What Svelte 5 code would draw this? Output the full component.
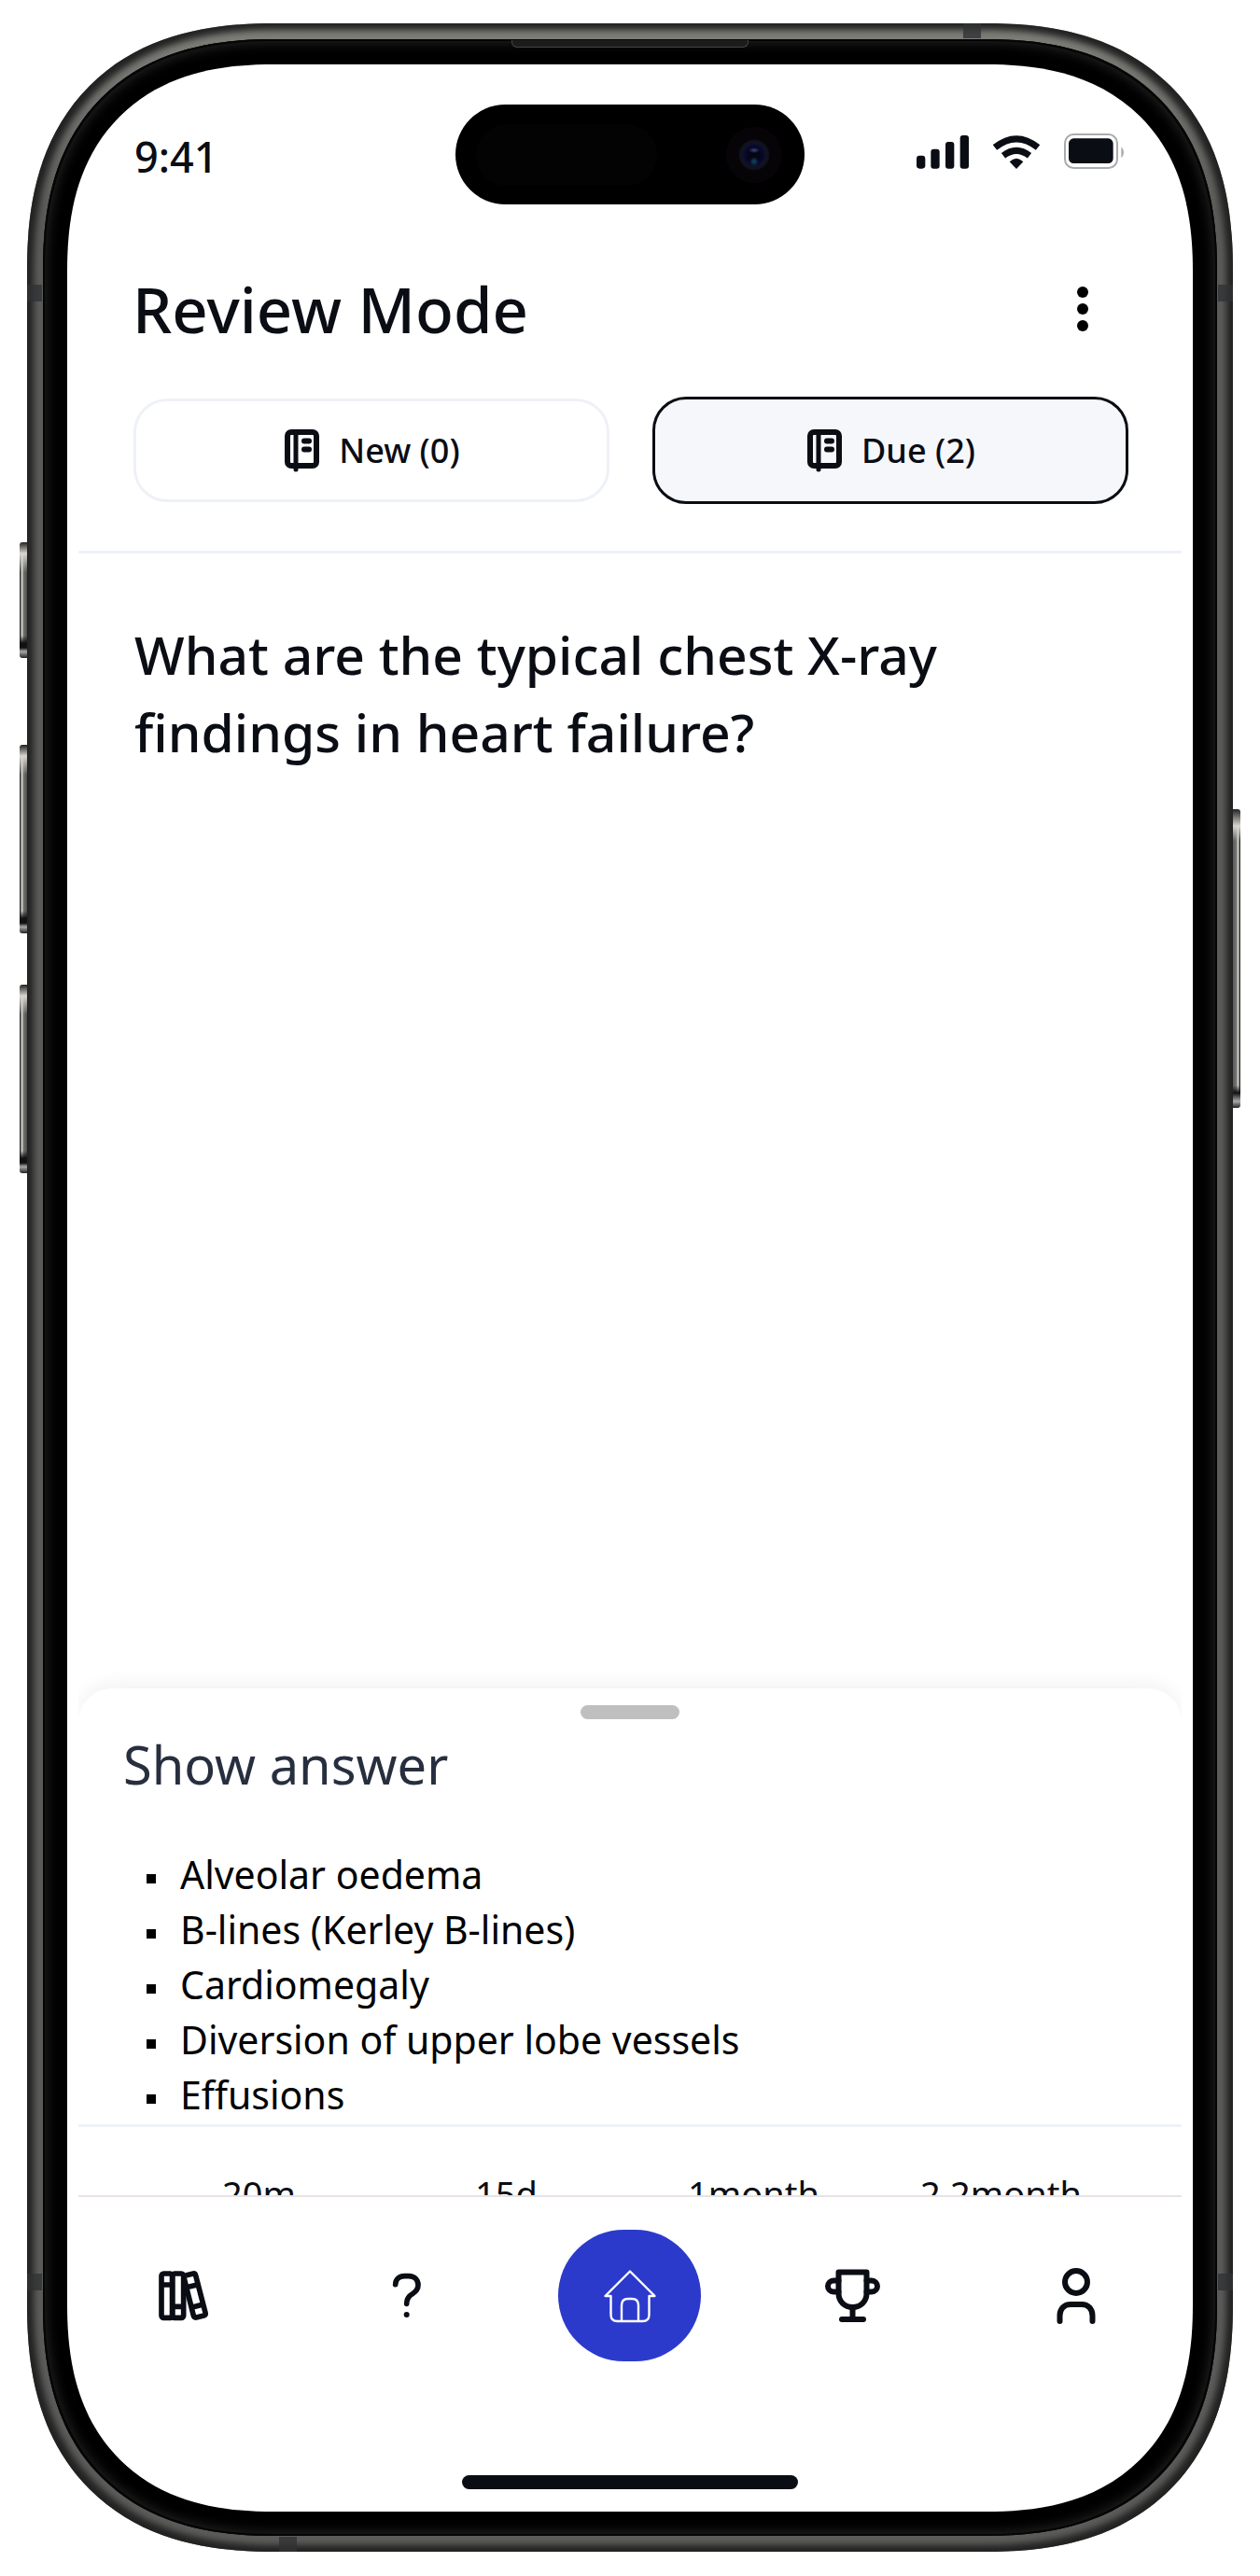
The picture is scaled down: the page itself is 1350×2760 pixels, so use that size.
<script>
  let selected = $state('due');
  const tabs = [
    { id: 'new', label: 'New (0)' },
    { id: 'due', label: 'Due (2)' }
  ];
  const answers = [
    'Alveolar oedema',
    'B-lines (Kerley B-lines)',
    'Cardiomegaly',
    'Diversion of upper lobe vessels',
    'Effusions'
  ];
  const intervals = ['20m', '15d', '1month', '2.2month'];
</script>

<div class="page">
  <div class="phone">
    <span class="key action"></span>
    <span class="key volume-up"></span>
    <span class="key volume-down"></span>
    <span class="key power"></span>
    <span class="band side left high"></span>
    <span class="band side left low"></span>
    <span class="band side right high"></span>
    <span class="band side right low"></span>
    <span class="band top"></span>
    <span class="band bottom"></span>

    <div class="bezel">
      <span class="speaker"></span>
      <div class="screen">
        <div class="island">
          <span class="sensor"></span>
          <span class="camera"></span>
        </div>

        <div class="status">
          <time>9:41</time>
          <div class="status-icons">
            <svg width="56" height="38" viewBox="0 -9 168 114" fill="currentColor" aria-hidden="true">
              <rect x="0" y="62" width="28" height="42" rx="10" />
              <rect x="46" y="41" width="28" height="63" rx="9" />
              <rect x="93" y="18" width="28" height="86" rx="9" />
              <rect x="140" y="-3" width="28" height="107" rx="9" />
            </svg>
            <svg width="50" height="38" viewBox="498 427 150 114" fill="none" stroke="currentColor" stroke-width="21" aria-hidden="true">
              <path d="M504 472Q573 417 642 472" />
              <path d="M531 498Q573 466 615 498" />
              <path d="M573 541L551 518Q573 496 595 518Z" fill="currentColor" stroke="none" />
            </svg>
            <svg width="65" height="38" viewBox="720 427 195 114" aria-hidden="true">
              <rect x="723" y="430" width="168" height="108" rx="28" fill="none" stroke="#aaabae" stroke-width="6" />
              <rect x="735" y="443" width="143" height="80" rx="16" fill="currentColor" />
              <path d="M904 470Q912 477 912 488T904 506Z" fill="#aaabae" />
            </svg>
          </div>
        </div>

        <header>
          <h1>Review Mode</h1>
          <button class="more" aria-label="More options">
            <svg width="12" height="48" viewBox="0 0 12 48" aria-hidden="true">
              <circle cx="6" cy="6" r="6" />
              <circle cx="6" cy="24" r="6" />
              <circle cx="6" cy="42" r="6" />
            </svg>
          </button>
        </header>

        <div class="tabs">
          {#each tabs as tab}
            <button
              class="tab"
              class:active={selected === tab.id}
              aria-pressed={selected === tab.id}
              onclick={() => (selected = tab.id)}
            >
              <svg width="42" height="50" viewBox="0 0 42 50" fill="none" stroke="currentColor" stroke-width="6" stroke-linecap="round" aria-hidden="true">
                <rect x="5" y="5" width="31" height="36" rx="4" />
                <path d="M14 6V45" stroke-width="5" />
                <path d="M23 14.5h5M23 23.5h5" />
              </svg>
              <span>{tab.label}</span>
            </button>
          {/each}
        </div>

        <main>
          <h2>What are the typical chest X-ray findings in heart failure?</h2>
        </main>

        <section class="sheet">
          <span class="handle"></span>
          <h3>Show answer</h3>
          <ul>
            {#each answers as answer}
              <li>{answer}</li>
            {/each}
          </ul>
          <div class="intervals">
            {#each intervals as interval}
              <button>{interval}</button>
            {/each}
          </div>
        </section>

        <nav>
          <a href="#library" aria-label="Library">
            <svg width="54" height="54" viewBox="507 97 162 162" fill="none" stroke="currentColor" stroke-width="17" stroke-linejoin="round" aria-hidden="true">
              <rect x="516" y="106" width="35" height="142" rx="7" />
              <rect x="551" y="106" width="36" height="142" rx="7" />
              <path d="M516 142H551M551 212H587" />
              <path d="M594 112L618 106Q624 105 626 112L657 231Q659 239 652 241L628 247Q621 248 619 241L588 118M596 150L634 141M613 215L650 205" />
            </svg>
          </a>
          <a href="#questions" aria-label="Questions">
            <svg width="32" height="50" viewBox="1264 104 96 150" fill="none" stroke="currentColor" stroke-width="17" stroke-linecap="round" aria-hidden="true">
              <path d="M1275 142C1276 124 1288 115 1304 115H1318C1336 115 1348 127 1348 144C1348 157 1341 165 1330 172C1318 179 1311 187 1311 204" />
              <circle cx="1311" cy="239" r="9" fill="currentColor" stroke="none" />
            </svg>
          </a>
          <a class="home" href="#home" aria-label="Home" aria-current="page">
            <svg width="60" height="60" viewBox="0 0 60 60" fill="none" stroke="#fff" stroke-width="2.4" stroke-linejoin="round" aria-hidden="true">
              <path d="M9.5 30H3.5L30 3.5L56.5 30H50.5V50Q50.5 57 43.5 57H16.5Q9.5 57 9.5 50Z" />
              <path d="M21 57V40Q21 33 28 33H32Q39 33 39 40V57" />
            </svg>
          </a>
          <a href="#awards" aria-label="Awards">
            <svg width="61" height="60" viewBox="0 0 61 60" fill="none" stroke="currentColor" stroke-width="6" stroke-linejoin="round" stroke-linecap="round" aria-hidden="true">
              <path d="M15.5 4.5H45.5V27C45.5 36 39 42 30.5 42S15.5 36 15.5 27Z" />
              <path d="M30.5 42V54M19 55H42" />
              <path d="M15.5 13.5H10a6 6 0 0 0 0 12H15.5M45.5 13.5H51a6 6 0 0 1 0 12H45.5" />
            </svg>
          </a>
          <a href="#profile" aria-label="Profile">
            <svg width="42" height="62" viewBox="0 0 42 62" fill="none" stroke="currentColor" stroke-width="6" stroke-linecap="round" aria-hidden="true">
              <circle cx="21" cy="16" r="12" />
              <path d="M3.5 58V52C3.5 45 8 40 15 40H27C34 40 38.5 45 38.5 52V58" />
            </svg>
          </a>
        </nav>
        <span class="home-indicator"></span>
      </div>
    </div>
  </div>
</div>

<style>
  :global(body) {
    background: #fff;
  }

  .page {
    box-sizing: border-box;
    min-height: 100vh;
    display: flex;
    flex-direction: column;
    padding: 25px 29px 26px;
    font-family: 'Noto Sans', 'Open Sans', sans-serif;
    color: #0a0d14;
  }

  .phone,
  .bezel,
  .screen {
    flex: 1;
    display: flex;
    flex-direction: column;
    position: relative;
    corner-shape: superellipse(1.25);
  }

  .phone {
    padding: 17px;
    border-radius: 265px;
    background: linear-gradient(#80807b, #5c5c5a 200px);
    box-shadow: inset 0 0 7px 7px #222;
  }

  .bezel {
    padding: 27px 26px 26px;
    border-radius: 248px;
    background: #000;
    box-shadow: inset 0 0 0 2px #050505, inset 0 0 14px 3px #272727;
  }

  .screen {
    border-radius: 222px;
    background: #fff;
    overflow: hidden;
  }

  .key {
    position: absolute;
    left: -8px;
    width: 8px;
    border-radius: 3px 0 0 3px;
    background:
      linear-gradient(#222, #d8d6cf 12px, transparent 32px calc(100% - 24px), #111 calc(100% - 16px), #111 calc(100% - 11px), #aaa calc(100% - 7px), #222),
      linear-gradient(90deg, #333 1px, #cfcdc6 2px 3px, #777 4px, #4c4c4a);
  }

  .action { top: 556px; height: 124px; }
  .volume-up { top: 773px; height: 202px; }
  .volume-down { top: 1030px; height: 202px; }

  .power {
    top: 842px;
    height: 320px;
    left: auto;
    right: -8px;
    border-radius: 0 3px 3px 0;
    background:
      linear-gradient(#222, #d8d6cf 18px, transparent 34px calc(100% - 24px), #111 calc(100% - 16px), #aaa calc(100% - 7px), #222),
      linear-gradient(270deg, #333 1px, #cfcdc6 2px 3px, #777 4px, #5c5c5a);
  }

  .band { position: absolute; background: #303234; opacity: 0.8; }
  .side { width: 16px; height: 18px; }
  .left { left: 0; }
  .right { right: 0; }
  .high { top: 280px; }
  .low { bottom: 280px; }
  .top { top: 0; right: 270px; width: 19px; height: 16px; }
  .bottom { bottom: 0; left: 270px; width: 19px; height: 16px; }

  .speaker {
    position: absolute;
    top: 1px;
    left: 50%;
    width: 252px;
    height: 7px;
    transform: translateX(-50%);
    border: solid #444;
    border-width: 0 1px 1px;
    border-radius: 0 0 6px 6px;
    background: #1c1c1c;
  }

  .island {
    position: absolute;
    top: 43px;
    left: 50%;
    width: 374px;
    height: 107px;
    transform: translateX(-50%);
    border-radius: 54px;
    background: #000;
  }

  .sensor {
    position: absolute;
    top: 21px;
    left: 22px;
    width: 194px;
    height: 66px;
    border-radius: 33px;
    background: #030303;
  }

  .camera {
    position: absolute;
    top: 24px;
    right: 24px;
    width: 60px;
    height: 60px;
    border-radius: 50%;
    background:
      radial-gradient(ellipse 6px 3px at 30px 25px, #454880, transparent),
      radial-gradient(circle 5px at 30px 37px, #154a60, transparent),
      radial-gradient(circle, #050514 6px, #070736 10px, #10131f 12px 15px, #070408 17px);
  }

  .status {
    display: flex;
    justify-content: space-between;
    padding: 69px 73px 0 72px;
  }

  time {
    font-size: 45px;
    font-weight: 500;
    line-height: 60px;
  }

  .status-icons {
    display: flex;
    gap: 26px;
    padding-top: 5px;
  }

  header {
    display: flex;
    align-items: center;
    justify-content: space-between;
    padding: 87px 112px 0 70px;
  }

  h1, h2, h3, ul { margin: 0; padding: 0; font-weight: 500; }

  h1 { font-size: 67px; line-height: 92px; }

  button {
    font: inherit;
    color: inherit;
    background: none;
    border: 0;
    padding: 0;
    cursor: pointer;
  }

  .more svg { display: block; fill: #000; }

  .tabs {
    display: flex;
    align-items: center;
    gap: 46px;
    margin: 0 12px;
    padding: 48px 57px 50px 59px;
    border-bottom: 3px solid #eef1f6;
  }

  .tab {
    flex: 1;
    display: flex;
    align-items: center;
    justify-content: center;
    gap: 18px;
    height: 111px;
    box-sizing: border-box;
    border: 3px solid #eef1f6;
    border-radius: 36px;
    font-size: 36px;
    font-weight: 500;
  }

  .tab.active {
    height: 115px;
    border-color: #0a0d14;
    background: #f6f7fb;
  }

  main {
    flex: 1;
    padding: 67px 72px;
  }

  h2 { max-width: 960px; font-size: 57px; line-height: 83px; }

  .sheet {
    display: flex;
    flex-direction: column;
    margin: 0 12px;
    padding-top: 18px;
    border-radius: 36px 36px 0 0;
    box-shadow: 0 -6px 18px rgba(0, 0, 0, 0.05);
    clip-path: inset(-40px 0 0 0);
    border-bottom: 2px solid #e8e3e2;
  }

  .handle {
    align-self: center;
    width: 106px;
    height: 15px;
    border-radius: 8px;
    background: #bfbfbf;
  }

  h3 {
    padding: 7px 48px 0;
    font-size: 56px;
    font-weight: 400;
    line-height: 83px;
    color: #272f3f;
  }

  ul {
    list-style: none;
    padding: 47px 24px 2px 73px;
    color: #000;
  }

  li {
    display: flex;
    align-items: center;
    gap: 26px;
    font-size: 41px;
    font-weight: 400;
    line-height: 59px;
  }

  li::before {
    content: '';
    width: 10px;
    height: 10px;
    margin-top: 8px;
    background: #000;
  }

  .intervals {
    display: grid;
    grid-template-columns: repeat(4, 1fr);
    height: 73px;
    padding: 0 61px;
    border-top: 3px solid #eef1f6;
    overflow: hidden;
  }

  .intervals button {
    height: 96px;
    padding-top: 46px;
    font-size: 38px;
    line-height: 50px;
  }

  nav {
    display: grid;
    grid-template-columns: repeat(5, 1fr);
    align-items: center;
    justify-items: center;
    padding: 35px 6px 122px;
  }

  nav a {
    display: flex;
    align-items: center;
    justify-content: center;
    color: inherit;
  }

  .home {
    width: 153px;
    height: 141px;
    border-radius: 71px;
    background: #2c3acb;
  }

  .home-indicator {
    align-self: center;
    width: 360px;
    height: 15px;
    margin-bottom: 24px;
    border-radius: 8px;
    background: #0a0d14;
  }
</style>
